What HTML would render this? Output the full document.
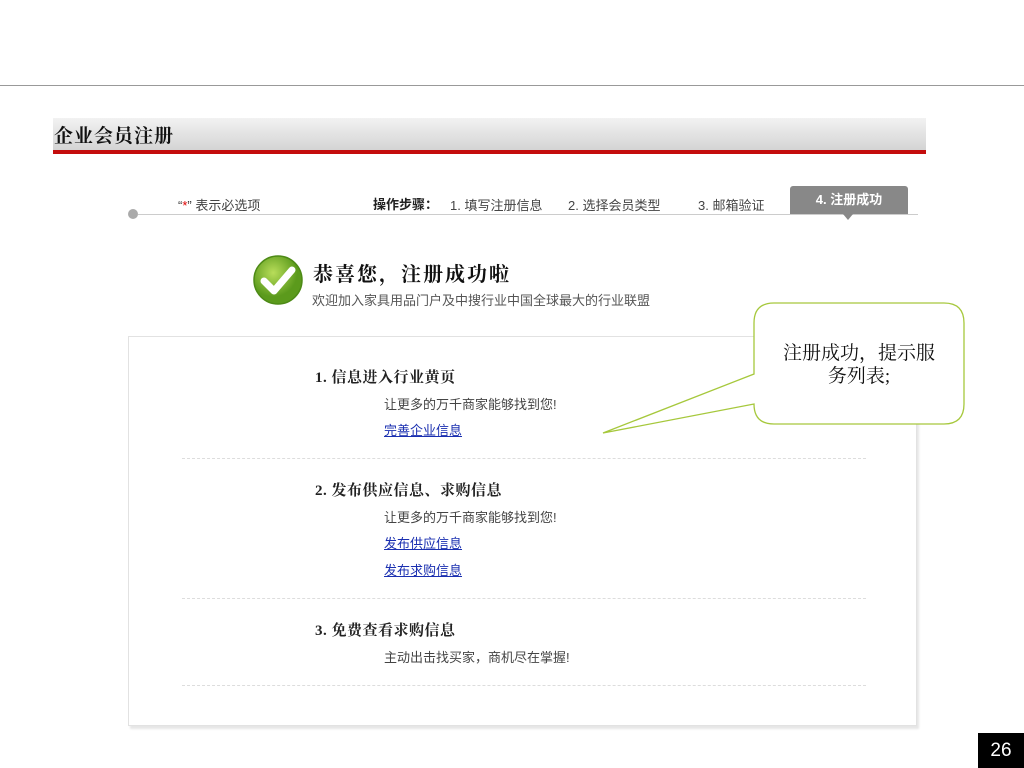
<!DOCTYPE html>
<html><head><meta charset="utf-8"><style>
*{margin:0;padding:0;box-sizing:border-box}
body{width:1024px;height:768px;background:#fff;position:relative;overflow:hidden;font-family:"Liberation Sans","Noto Sans CJK SC",sans-serif;color:#333}
.a{position:absolute;white-space:nowrap}
.s{font-size:13px;color:#444}
.h{font-size:15px;font-weight:bold;color:#222;font-family:"Liberation Serif","Noto Serif CJK SC",serif;letter-spacing:0.5px}
.l{font-size:13px;color:#1a2fb0;text-decoration:underline}
.dash{position:absolute;left:182px;width:684px;border-top:1px dashed #ddd}
</style></head><body>
<div class="a" style="left:0;top:85px;width:1024px;height:1px;background:#999"></div>
<div class="a" style="left:53px;top:118px;width:873px;height:32px;background:linear-gradient(#f2f2f2,#d4d4d4)"></div>
<div class="a" style="left:53px;top:150px;width:873px;height:4px;background:#c40d0d"></div>
<div class="a" style="left:54px;top:121px;font-size:19px;font-weight:bold;color:#111;font-family:'Liberation Serif','Noto Serif CJK SC',serif;letter-spacing:1px">企业会员注册</div>
<div class="a" style="left:138px;top:214px;width:780px;height:1px;background:#ccc"></div>
<div class="a" style="left:128px;top:209px;width:10px;height:10px;border-radius:50%;background:#aaa"></div>
<div class="a s" style="left:178px;top:195px">“<span style="color:#d00">*</span>” 表示必选项</div>
<div class="a" style="left:373px;top:194px;font-size:13px;font-weight:bold;color:#222">操作步骤：</div>
<div class="a s" style="left:450px;top:195px">1. 填写注册信息</div>
<div class="a s" style="left:568px;top:195px">2. 选择会员类型</div>
<div class="a s" style="left:698px;top:195px">3. 邮箱验证</div>
<div class="a" style="left:790px;top:186px;width:118px;height:28px;background:#888;border-radius:3px 3px 0 0;color:#fff;font-size:13px;font-weight:bold;text-align:center;line-height:28px">4. 注册成功</div>
<div class="a" style="left:843px;top:214px;border-left:5px solid transparent;border-right:5px solid transparent;border-top:6px solid #888"></div>
<svg class="a" style="left:252px;top:254px" width="52" height="52"><defs><radialGradient id="g" cx="40%" cy="35%"><stop offset="0" stop-color="#b8dd5a"/><stop offset="1" stop-color="#5b9a1c"/></radialGradient></defs><circle cx="26" cy="26" r="24" fill="url(#g)" stroke="#4d8a16" stroke-width="1.5"/><path d="M12 27 L22 37 L40 16" fill="none" stroke="#fff" stroke-width="7" stroke-linecap="round" stroke-linejoin="round"/></svg>
<div class="a" style="left:313px;top:258px;font-size:20px;font-weight:bold;color:#111;font-family:'Liberation Serif','Noto Serif CJK SC',serif;letter-spacing:2px">恭喜您，注册成功啦</div>
<div class="a s" style="left:312px;top:290px;color:#555">欢迎加入家具用品门户及中搜行业中国全球最大的行业联盟</div>
<div class="a" style="left:128px;top:336px;width:789px;height:390px;border:1px solid #e2e2e2;box-shadow:2px 3px 2px #e6e6e6"></div>
<div class="a h" style="left:315px;top:366px">1. 信息进入行业黄页</div>
<div class="a s" style="left:384px;top:394px">让更多的万千商家能够找到您!</div>
<div class="a l" style="left:384px;top:420px">完善企业信息</div>
<div class="dash" style="top:458px"></div>
<div class="a h" style="left:315px;top:479px">2. 发布供应信息、求购信息</div>
<div class="a s" style="left:384px;top:507px">让更多的万千商家能够找到您!</div>
<div class="a l" style="left:384px;top:533px">发布供应信息</div>
<div class="a l" style="left:384px;top:560px">发布求购信息</div>
<div class="dash" style="top:598px"></div>
<div class="a h" style="left:315px;top:619px">3. 免费查看求购信息</div>
<div class="a s" style="left:384px;top:647px">主动出击找买家，商机尽在掌握!</div>
<div class="dash" style="top:685px"></div>
<svg class="a" style="left:0;top:0" width="1024" height="768"><path d="M774 303 H944 Q964 303 964 323 V404 Q964 424 944 424 H774 Q754 424 754 404 L603 433 L754 374 V323 Q754 303 774 303 Z" fill="#fff" stroke="#a6c83c" stroke-width="1.3"/></svg>
<div class="a" style="left:758px;top:342px;width:202px;text-align:center;white-space:normal;font-size:19px;line-height:23px;color:#111;font-family:'Liberation Serif','Noto Serif CJK SC',serif">注册成功，提示服<br>务列表;</div>
<div class="a" style="left:978px;top:733px;width:46px;height:35px;background:#000;color:#fff;font-size:19px;text-align:center;line-height:35px">26</div>
</body></html>
